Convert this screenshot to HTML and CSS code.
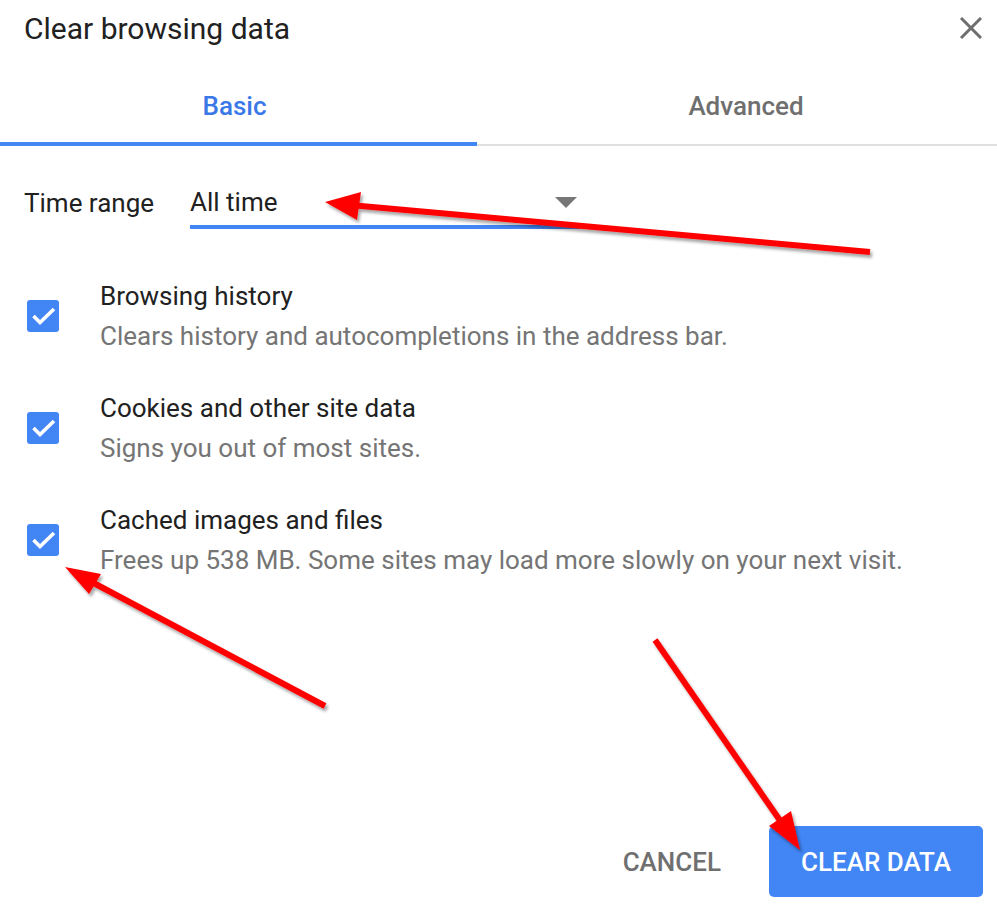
FILE: index.html
```html
<!DOCTYPE html>
<html>
<head>
    <title>Clear browsing data</title>
    <link rel="stylesheet" href="styles.css">
</head>
<body>
    <div class="dialog">
        <div class="header">
            <h1>Clear browsing data</h1>
            <button class="close" aria-label="Close">
                <svg width="22" height="22" viewBox="0 0 22 22">
                    <path d="M1 1 L21 21 M21 1 L1 21" stroke="#6e6e6e" stroke-width="3" fill="none"/>
                </svg>
            </button>
        </div>

        <div class="tabs">
            <div class="tab active">Basic</div>
            <div class="tab other">Advanced</div>
        </div>

        <div class="range">
            <span class="range-label">Time range</span>
            <div class="select">
                <span>All time</span>
                <span class="caret"></span>
            </div>
        </div>

        <div class="options">
            <div class="option">
                <span class="check">
                    <svg width="32" height="32" viewBox="0 0 32 32">
                        <path d="M6.5 16 L13 22.5 L27 9" stroke="#fff" stroke-width="3.6" fill="none"/>
                    </svg>
                </span>
                <div class="option-text">
                    <div class="option-title">Browsing history</div>
                    <div class="option-desc">Clears history and autocompletions in the address bar.</div>
                </div>
            </div>
            <div class="option">
                <span class="check">
                    <svg width="32" height="32" viewBox="0 0 32 32">
                        <path d="M6.5 16 L13 22.5 L27 9" stroke="#fff" stroke-width="3.6" fill="none"/>
                    </svg>
                </span>
                <div class="option-text">
                    <div class="option-title">Cookies and other site data</div>
                    <div class="option-desc">Signs you out of most sites.</div>
                </div>
            </div>
            <div class="option">
                <span class="check">
                    <svg width="32" height="32" viewBox="0 0 32 32">
                        <path d="M6.5 16 L13 22.5 L27 9" stroke="#fff" stroke-width="3.6" fill="none"/>
                    </svg>
                </span>
                <div class="option-text">
                    <div class="option-title">Cached images and files</div>
                    <div class="option-desc">Frees up 538 MB. Some sites may load more slowly on your next visit.</div>
                </div>
            </div>
        </div>

        <div class="actions">
            <button class="btn cancel">CANCEL</button>
            <button class="btn primary">CLEAR DATA</button>
        </div>

        <!-- annotation arrows drawn over the screenshot -->
        <svg class="arrows" width="997" height="916" viewBox="0 0 997 916">
            <defs>
                <filter id="shadow" x="-10%" y="-10%" width="130%" height="130%">
                    <feDropShadow dx="2" dy="3" stdDeviation="1.5" flood-color="#000" flood-opacity="0.35"/>
                </filter>
            </defs>
            <g filter="url(#shadow)" fill="#ff0000" stroke="#ff0000">
                <line x1="870" y1="252" x2="350" y2="205" stroke-width="6"/>
                <polygon points="325,202 361,192 357,220" stroke="none"/>

                <line x1="325" y1="706" x2="88" y2="580" stroke-width="6"/>
                <polygon points="65,567 101,574 89,594" stroke="none"/>

                <line x1="655" y1="640" x2="788" y2="832" stroke-width="6"/>
                <polygon points="800,850 769,826 791,811" stroke="none"/>
            </g>
        </svg>
    </div>
</body>
</html>
```

FILE: styles.css
```css
body {
    margin: 0;
    background: #fff;
    font-family: Roboto, "Liberation Sans", Arial, sans-serif;
    color: #212121;
}

.dialog {
    position: relative;
    width: 997px;
    height: 916px;
    overflow: hidden;
}

.header {
    display: flex;
    justify-content: space-between;
    align-items: center;
    padding: 9px 15px 0 24px;
    height: 39px;
}

h1 {
    margin: 0;
    font-size: 30px;
    font-weight: 400;
    color: #212121;
}

.close {
    border: none;
    background: none;
    padding: 0;
    width: 22px;
    height: 22px;
    margin-top: -1px;
}

.tabs {
    display: flex;
    margin-top: 30px;
    border-bottom: 2px solid #e0e0e0;
}

.tab {
    text-align: center;
    font-size: 26px;
    font-weight: 500;
    color: #6f6f6f;
    padding: 13px 0 21px;
}

.tab.active {
    width: 469px;
    padding-right: 8px;
    color: #3b78e7;
    border-bottom: 4px solid #4285f4;
    margin-bottom: -2px;
}

.tab.other {
    flex: 1;
    padding-left: 18px;
}

.range {
    display: flex;
    align-items: flex-start;
    padding: 0 24px;
    margin-top: 41px;
}

.range-label {
    font-size: 26px;
    width: 166px;
    margin-top: 1px;
}

.select {
    display: flex;
    justify-content: space-between;
    align-items: center;
    width: 390px;
    border-bottom: 4px solid #4285f4;
    font-size: 26px;
    padding-bottom: 8px;
}

.caret {
    width: 0;
    height: 0;
    border-left: 11px solid transparent;
    border-right: 11px solid transparent;
    border-top: 11px solid #777;
    margin-right: 3px;
}

.options {
    margin-top: 47px;
    display: flex;
    flex-direction: column;
    gap: 32px;
}

.option {
    display: flex;
    align-items: center;
    padding-left: 27px;
}

.check {
    width: 32px;
    height: 32px;
    background: #4285f4;
    border-radius: 3px;
    margin-right: 41px;
}

.option-title {
    font-size: 26px;
    color: #212121;
    line-height: 40px;
}

.option-desc {
    font-size: 26px;
    color: #757575;
    line-height: 40px;
}

.actions {
    position: absolute;
    right: 14px;
    bottom: 19px;
    display: flex;
    align-items: center;
    gap: 48px;
}

.btn {
    font-family: Roboto, "Liberation Sans", Arial, sans-serif;
    font-size: 26px;
    font-weight: 500;
    border: none;
    background: none;
    cursor: pointer;
}

.cancel {
    color: #6f6f6f;
    padding: 0;
}

.primary {
    background: #4285f4;
    color: #fff;
    width: 214px;
    height: 71px;
    border-radius: 5px;
}

.arrows {
    position: absolute;
    left: 0;
    top: 0;
    pointer-events: none;
}
```
